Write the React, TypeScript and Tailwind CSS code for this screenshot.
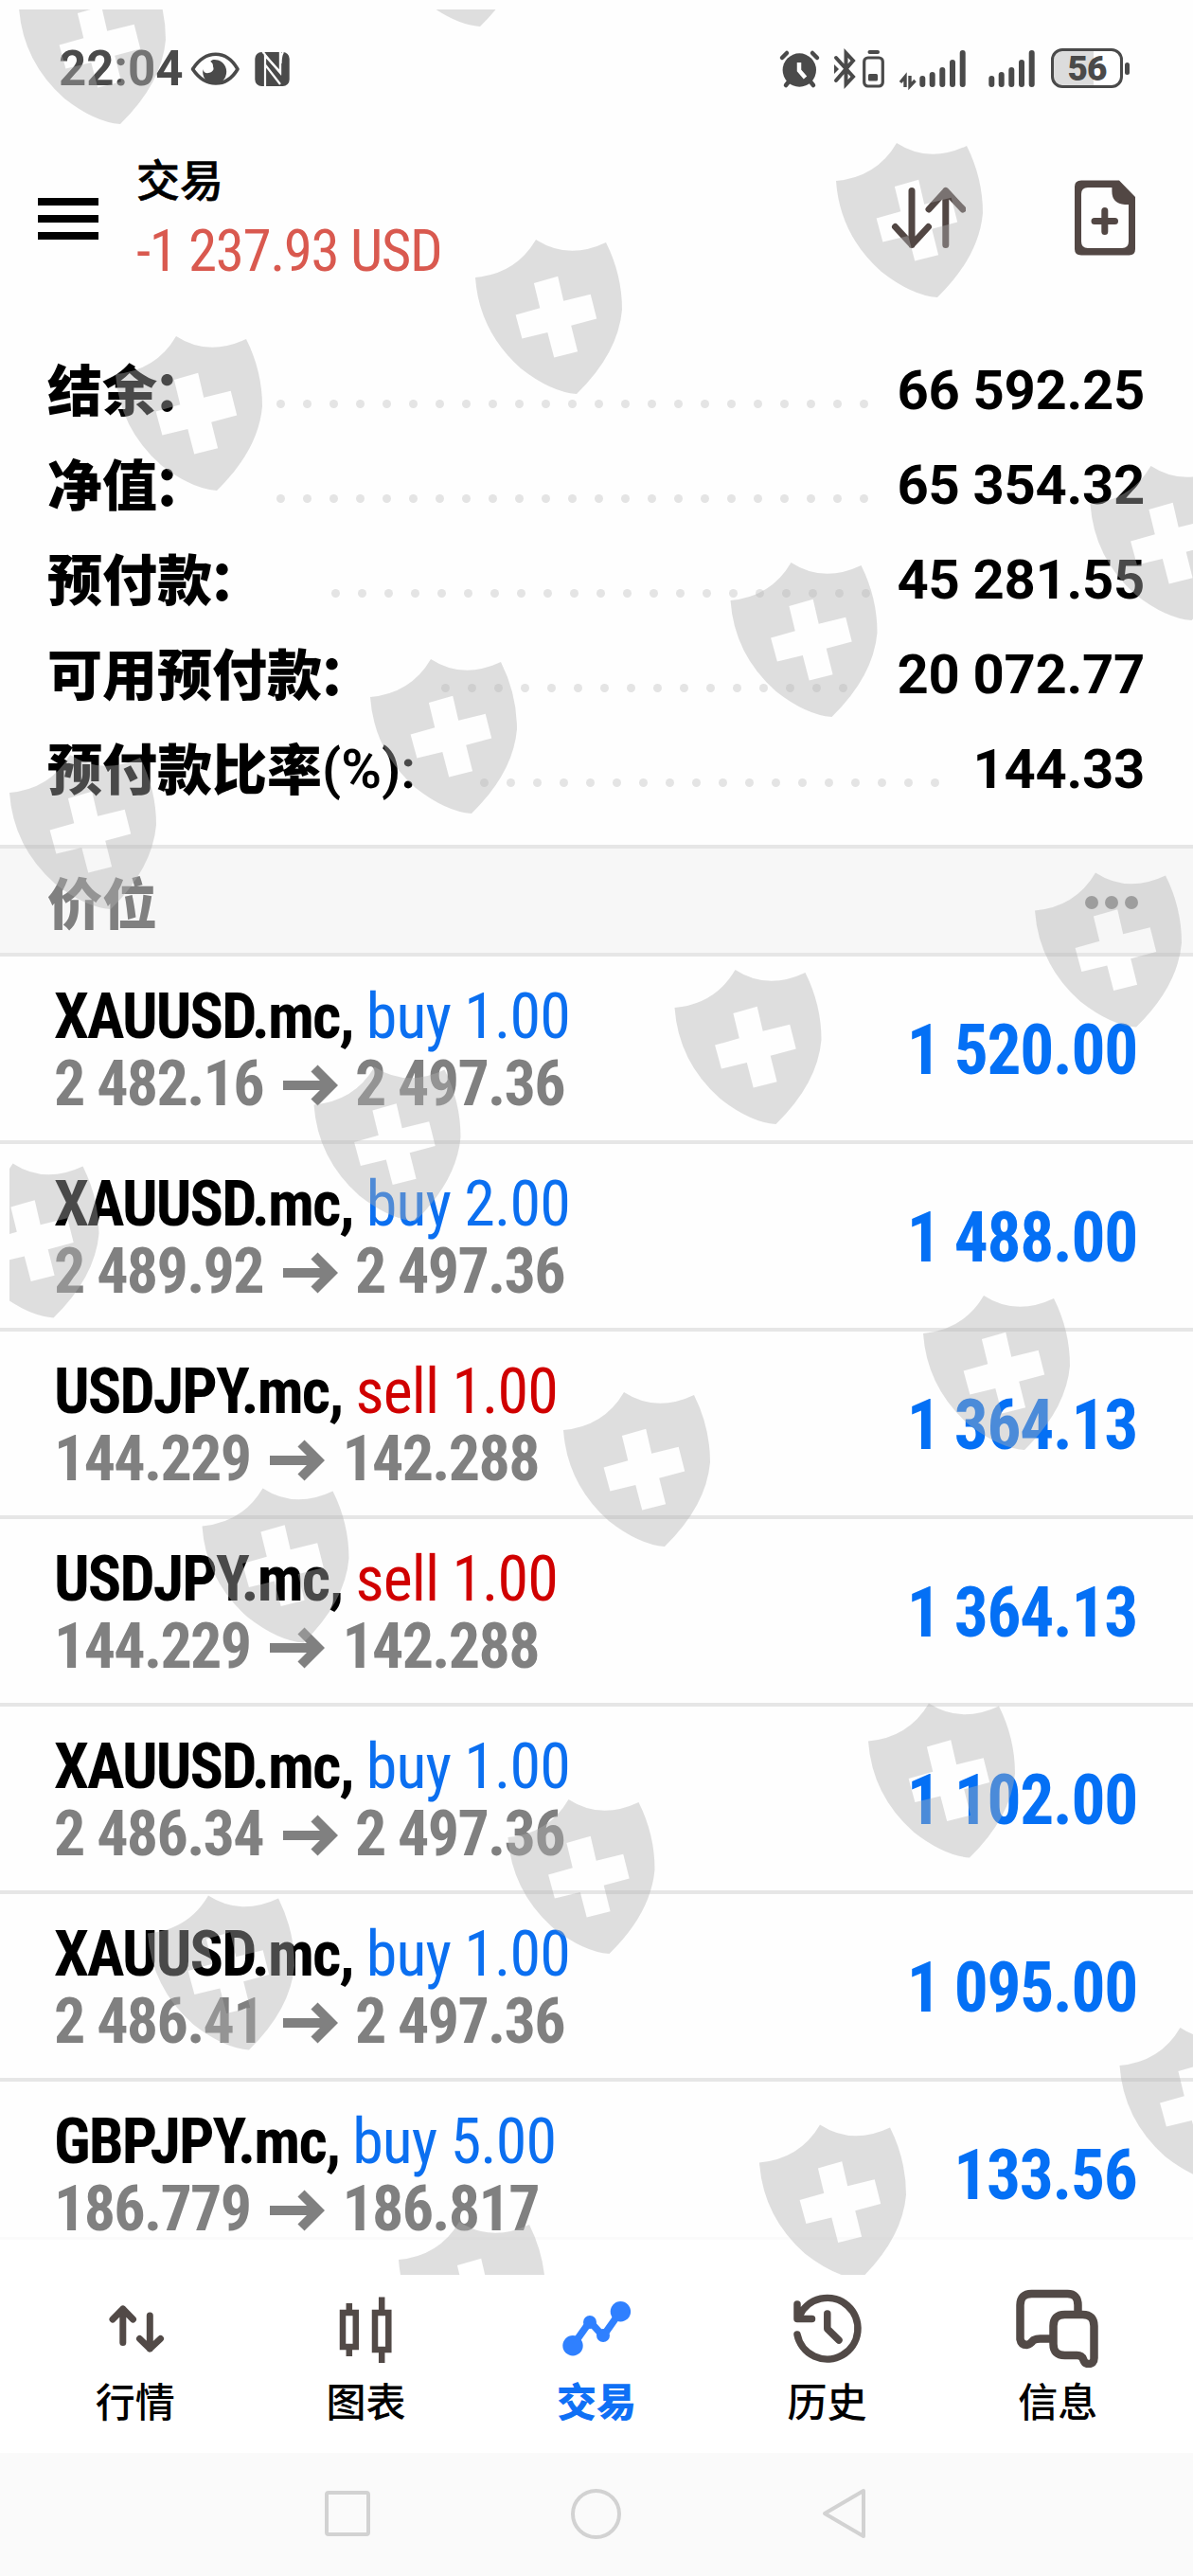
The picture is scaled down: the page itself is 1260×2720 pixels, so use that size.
import { ReactNode } from "react";
import clsx from "clsx";

type Side = "buy" | "sell";

interface Position {
    symbol: string;
    side: Side;
    volume: string;
    open: string;
    current: string;
    profit: string;
}

const summary = [
    { label: "结余", value: "66 592.25", dots: 23 },
    { label: "净值", value: "65 354.32", dots: 23 },
    { label: "预付款", value: "45 281.55", dots: 21 },
    { label: "可用预付款", value: "20 072.77", dots: 16 },
    { label: "预付款比率", suffix: "(%):", value: "144.33", dots: 18 },
];

const positions: Position[] = [
    { symbol: "XAUUSD.mc", side: "buy", volume: "1.00", open: "2 482.16", current: "2 497.36", profit: "1 520.00" },
    { symbol: "XAUUSD.mc", side: "buy", volume: "2.00", open: "2 489.92", current: "2 497.36", profit: "1 488.00" },
    { symbol: "USDJPY.mc", side: "sell", volume: "1.00", open: "144.229", current: "142.288", profit: "1 364.13" },
    { symbol: "USDJPY.mc", side: "sell", volume: "1.00", open: "144.229", current: "142.288", profit: "1 364.13" },
    { symbol: "XAUUSD.mc", side: "buy", volume: "1.00", open: "2 486.34", current: "2 497.36", profit: "1 102.00" },
    { symbol: "XAUUSD.mc", side: "buy", volume: "1.00", open: "2 486.41", current: "2 497.36", profit: "1 095.00" },
    { symbol: "GBPJPY.mc", side: "buy", volume: "5.00", open: "186.779", current: "186.817", profit: "133.56" },
];

// top-left corner of every shield in the overlay
const shields = [
    [20, -32], [400, -135], [883, 151], [502, 253], [122, 355],
    [1151.5, 492], [771.5, 594], [391, 696], [10, 797],
    [1093, 921.5], [712.5, 1024], [331.5, 1126.5], [-50.5, 1228.5],
    [975, 1368], [595, 1470], [213.5, 1571.5],
    [917, 1798.5], [536.5, 1900], [156, 2001.5],
    [1182.5, 2141], [802, 2243.5], [421, 2346],
];

const Watermark = () => (
    <svg className="absolute inset-0 pointer-events-none" width="1260" height="2720">
        <defs>
            <clipPath id="wm">
                <rect x="10" y="10" width="1250" height="2392" />
            </clipPath>
            <path
                id="shield"
                fillRule="evenodd"
                d="M0 40 Q43 36 64 0 Q98 22 138 3 Q155 37 155 74 Q151 120 107 163 Q80 161 48 136 Q4 97 0 40Z M61.9 45.9 L87.2 38.7 L93.2 64.7 L121.7 57.8 L128.2 83.4 L101.2 90.7 L108.1 118.3 L83.2 124.4 L76.3 98 L49.4 104.5 L42.6 79.6 L68.3 72.3Z"
            />
        </defs>
        <g clipPath="url(#wm)" fill="#b2b2b2" fillOpacity="0.41">
            {shields.map(([x, y]) => (
                <use key={`${x}-${y}`} href="#shield" x={x} y={y} />
            ))}
        </g>
    </svg>
);

const Bars = () => (
    <svg width="49" height="40" viewBox="971 51 49 40" stroke="#4a4a4a" strokeWidth="6" strokeLinecap="round">
        <path d="M974.3 82V88M984.7 78V88M995.3 73V88M1006 65V88M1016.7 55V88" />
    </svg>
);

const StatusBar = () => (
    <div className="flex h-[140px] shrink-0 pt-[50px] text-[#4a4a4a]">
        <div className="ml-[62px] w-[138px] text-[51px] leading-[46px] font-bold whitespace-nowrap">22:04</div>
        <svg className="shrink-0" width="108" height="46" viewBox="200 49 108 46">
            <path d="M203.500 72C217 51 239 51 251 72C239 92 217 92 203.500 72Z" fill="none" stroke="#4a4a4a" strokeWidth="3.600" strokeLinejoin="round" />
            <path d="M225 62A12.500 13 0 1 1 214.500 72C215 79 225 76 225.500 72C226 68 222 67 222 65Q222 63 225 62Z" fill="#4a4a4a" />
            <circle cx="220" cy="68.500" r="5" fill="#fff" />
            <rect x="269.300" y="54" width="36.400" height="36" rx="7" fill="#4a4a4a" />
            <path d="M280 90V58Q280 55 277 54M280 58L296 75V54" fill="none" stroke="#fff" strokeWidth="2.200" />
            <path d="M296 54V76L280 57M299 54Q296.500 58 296.500 66M280.500 68L296 88" fill="none" stroke="#fff" strokeWidth="2.200" />
        </svg>
        <svg className="ml-[514px] shrink-0" width="146" height="46" viewBox="822 49 146 46" fill="none" stroke="#4a4a4a" strokeLinecap="round">
            <circle cx="844.300" cy="73" r="17.700" fill="#4a4a4a" stroke="none" />
            <path d="M826 60L831 55M863 60L858 55M830 89L834 84M859 89L855 84" strokeWidth="4.500" />
            <path d="M844 65V73.500L850.500 81" stroke="#fff" strokeWidth="4.500" strokeLinecap="butt" />
            <path d="M883 60L901 80L893.500 88V55L901 63L883 84" strokeWidth="4" />
            <path d="M881 67L886 72L881 77Z" fill="#4a4a4a" stroke="none" />
            <rect x="912.700" y="60" width="19.600" height="30" rx="4" strokeWidth="3.200" />
            <path d="M918.500 54H927" strokeWidth="4" />
            <rect x="917" y="77" width="10" height="7.500" rx="1.500" fill="#4a4a4a" stroke="none" />
            <path d="M951 86L956 80V91M961 79V90L966.500 84" strokeWidth="3.400" strokeLinecap="butt" />
        </svg>
        <div className="ml-[3px] mt-[2px] shrink-0">
            <Bars />
        </div>
        <div className="ml-[24px] mt-[2px] shrink-0">
            <Bars />
        </div>
        <div className="ml-[17px] mt-px flex h-[42px] shrink-0 items-center">
            <div className="flex h-[42px] w-[76px] items-center justify-center rounded-[12px] border-[3px] border-[#4a4a4a] bg-linear-to-r from-[#dcdcdc] from-60% to-white to-60% pt-[2px] text-[37px] leading-[36px] font-black tracking-[-1px]">
                56
            </div>
            <div className="ml-[2px] h-[13px] w-[5px] rounded-full bg-[#4a4a4a]" />
        </div>
    </div>
);

const Header = () => (
    <div className="flex h-[220px] shrink-0">
        <div className="mt-[69px] ml-[40px] flex w-[64px] flex-col gap-[10px]">
            <span className="h-[8px] bg-black" />
            <span className="h-[8px] bg-black" />
            <span className="h-[8px] bg-black" />
        </div>
        <div className="ml-[40px] mt-[19px] w-[600px]">
            <div className="font-[Noto_Sans_CJK_SC] text-[46px] leading-[56px] font-medium text-black [-webkit-text-stroke:0.6px_black]">交易</div>
            <div className="mt-[14px] text-[61px] leading-[72px] tracking-[-1.4px] [font-stretch:75%] whitespace-nowrap text-[#d9594f]">-1 237.93 USD</div>
        </div>
        <svg className="mt-[50px] ml-[196px] shrink-0" width="80" height="80" viewBox="940 190 80 80" fill="none" stroke="#524744" strokeWidth="7" strokeLinecap="round" strokeLinejoin="round">
            <path d="M963 201.500V258.500M945.500 239.500L963 258.500L980.500 239.500M998.800 258.500V201.500M981 221L998.800 201.500L1017 221" />
        </svg>
        <svg className="mt-[50px] ml-[114px] shrink-0" width="66" height="80" viewBox="1134 190 66 80">
            <path
                fill="#524744"
                fillRule="evenodd"
                d="M1142 190.500H1182L1199 208V263Q1199 269.500 1192.500 269.500H1142Q1135 269.500 1135 263V197Q1135 190.500 1142 190.500ZM1149 198Q1142 198 1142 205V255Q1142 262 1149 262H1185Q1192 262 1192 255V216H1188Q1174.400 215 1174.400 202V198Z"
            />
            <path d="M1156 233.500H1177.500M1166.800 222.500V244.500" stroke="#524744" strokeWidth="7" strokeLinecap="round" />
        </svg>
    </div>
);

const Summary = () => (
    <div className="flex h-[532px] shrink-0 flex-col pt-[2px]">
        {summary.map((row) => (
            <div key={row.label} className="flex h-[100px] items-center pl-[50px] pr-[51px] text-[58px] leading-[100px] font-semibold whitespace-nowrap text-black">
                <span className="-mt-[6px] font-[Noto_Sans_CJK_SC] font-black">{row.label}</span>
                {row.suffix ? (
                    <span>{row.suffix}</span>
                ) : (
                    <span className="-mt-[6px] mr-[4px] -ml-[4px] font-[Noto_Sans_CJK_SC] font-black">：</span>
                )}
                <div className="mt-[28px] ml-[68px] flex gap-[19px]">
                    {Array.from({ length: row.dots }, (_, i) => (
                        <i key={i} className="size-[9px] shrink-0 rounded-full bg-[#e4e4e4]" />
                    ))}
                </div>
                <span className="ml-auto font-bold tracking-[-0.3px]">{row.value}</span>
            </div>
        ))}
    </div>
);

const PositionRow = ({ symbol, side, volume, open, current, profit }: Position) => (
    <div className="flex h-[198px] shrink-0 justify-between border-b-4 border-[#e6e6e6] pr-[59px] pl-[57px] whitespace-nowrap [font-stretch:75%] last:h-[164px] last:border-0">
        <div className="pt-[28px] text-[66px]">
            <div className="leading-[71px] font-bold tracking-[-1.9px] text-black">
                {symbol},
                <span className={clsx("ml-[14px] font-normal tracking-[-0.9px]", side === "buy" ? "text-[#0b6ff0]" : "text-[#d00000]")}>
                    {side} {volume}
                </span>
            </div>
            <div className="mt-[10px] flex h-[52px] items-center leading-[52px] font-bold tracking-[-1.7px] text-[#808080]">
                {open}
                <svg className="mr-[18px] ml-[21px] mt-[2px]" width="58" height="44" fill="none" stroke="#808080" strokeWidth="10">
                    <path d="M0 22H50M33 4L51 22L33 40" />
                </svg>
                {current}
            </div>
        </div>
        <div className="h-[190px] origin-right scale-x-[0.95] pt-[3px] text-[75px] leading-[190px] font-bold tracking-[-1.3px] text-[#0470f5]">{profit}</div>
    </div>
);

const NavItem = ({ label, active, children }: { label: string; active?: boolean; children: ReactNode }) => (
    <div className="flex flex-1 flex-col items-center pt-[45px]">
        {children}
        <span className={clsx("mt-[4px] font-[Noto_Sans_CJK_SC] text-[42px] leading-[60px]", active ? "font-black text-[#0f70f5]" : "font-medium text-black")}>
            {label}
        </span>
    </div>
);

const BottomNav = () => (
    <div className="flex h-[228px] shrink-0 border-t-[3px] border-[#fafafa] bg-white px-[21px]">
        <NavItem label="行情">
            <svg width="90" height="90" viewBox="98 2410 90 90" fill="none" stroke="#524a47" strokeWidth="7" strokeLinecap="round" strokeLinejoin="round">
                <path d="M129.800 2473.500V2438M119 2449L129.800 2438L140.500 2449M158.300 2445V2480M147.500 2469.500L158.300 2480L169.500 2469.500" />
            </svg>
        </NavItem>
        <NavItem label="图表">
            <svg width="90" height="90" viewBox="342 2410 90 90" fill="none" stroke="#524a47" strokeWidth="6.500">
                <path d="M363 2442H376.800V2478H363ZM369.800 2432V2440M369.800 2480V2488M397 2442H411.300V2481H397ZM404.200 2425.500V2440M404.200 2483V2495" />
            </svg>
        </NavItem>
        <NavItem label="交易" active>
            <svg width="90" height="90" viewBox="585 2410 90 90" fill="#2f80ff">
                <path d="M605 2476.700L623 2451.300L637 2466.700L655.400 2440.700" fill="none" stroke="#2f80ff" strokeWidth="7.500" />
                <circle cx="605" cy="2476.700" r="10.700" />
                <circle cx="623" cy="2452" r="7" />
                <circle cx="637" cy="2466" r="7" />
                <circle cx="655.400" cy="2440.700" r="10.700" />
            </svg>
        </NavItem>
        <NavItem label="历史">
            <svg width="90" height="90" viewBox="828 2410 90 90" fill="none" stroke="#524a47" strokeWidth="7.500" strokeLinecap="round" strokeLinejoin="round">
                <path d="M841 2465A32.300 32.300 0 1 0 843 2446M841 2433V2448.500H856.500M872.800 2443V2459L885 2471" />
            </svg>
        </NavItem>
        <NavItem label="信息">
            <svg width="90" height="90" viewBox="1071.500 2410 90 90" fill="none" stroke="#524a47" strokeWidth="8.500" strokeLinejoin="round">
                <path d="M1138 2443V2434Q1138 2422 1127 2422H1089Q1077 2422 1077 2434V2470Q1078 2476 1084 2476Q1088 2475 1091 2471Q1094 2469.500 1098 2469.500H1111" />
                <path d="M1124 2444H1143Q1155 2444 1155 2456V2490Q1155 2496 1149 2496Q1145 2496 1143.500 2491Q1142 2487 1137 2487H1124Q1112 2487 1112 2475V2456Q1112 2444 1124 2444Z" />
            </svg>
        </NavItem>
    </div>
);

const SystemBar = () => (
    <div className="flex h-[130px] shrink-0 items-center bg-[#fafafa] pb-[2px]">
        <div className="ml-[343px] size-[48px] rounded-[4px] border-4 border-[#d2d2d2]" />
        <div className="ml-[212px] size-[53px] rounded-full border-4 border-[#d2d2d2]" />
        <svg className="ml-[212px]" width="48" height="54" fill="none" stroke="#d2d2d2" strokeWidth="4" strokeLinejoin="round">
            <path d="M3 27L44 3V51Z" />
        </svg>
    </div>
);

export default function App() {
    return (
        <div className="relative flex h-[2720px] w-[1260px] flex-col overflow-hidden bg-[#fefefe] font-[Roboto,Noto_Sans_CJK_SC,sans-serif]">
            <StatusBar />
            <Header />
            <Summary />
            <div className="flex h-[118px] shrink-0 items-center justify-between border-y-4 border-[#e6e6e6] bg-[#f7f7f7] pl-[50px] pr-[58px]">
                <span className="font-[Noto_Sans_CJK_SC] text-[58px] leading-[100px] font-black text-[#808080]">价位</span>
                <div className="mt-[3px] flex gap-[7px]">
                    <i className="size-[14px] rounded-full bg-[#909090]" />
                    <i className="size-[14px] rounded-full bg-[#909090]" />
                    <i className="size-[14px] rounded-full bg-[#909090]" />
                </div>
            </div>
            <div className="flex h-[1352px] shrink-0 flex-col">
                {positions.map((p, i) => (
                    <PositionRow key={i} {...p} />
                ))}
            </div>
            <BottomNav />
            <SystemBar />
            <Watermark />
        </div>
    );
}
